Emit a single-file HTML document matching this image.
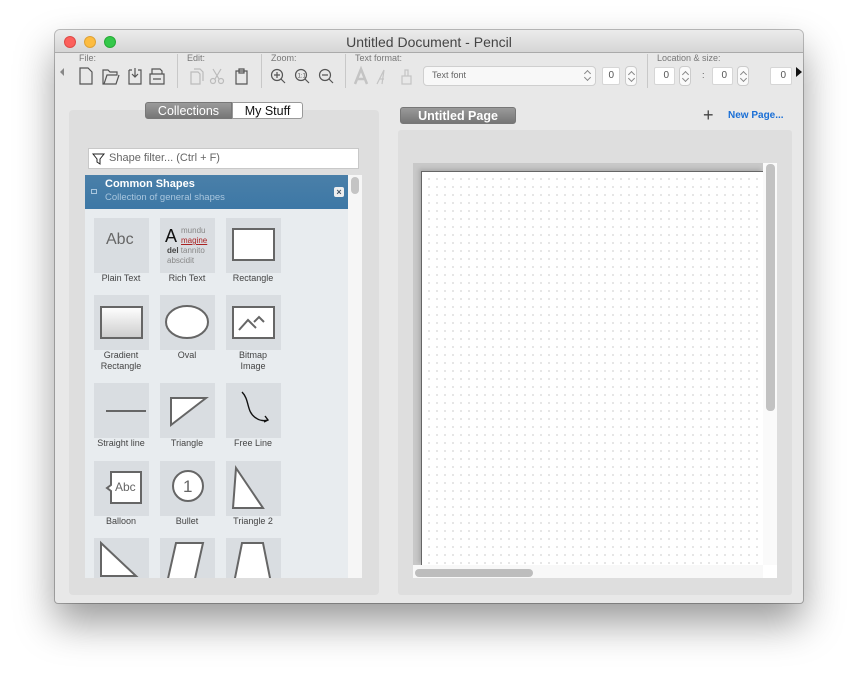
<!DOCTYPE html>
<html><head><meta charset="utf-8"><style>
*{margin:0;padding:0;box-sizing:border-box}
body{width:859px;height:683px;background:#fff;font-family:"Liberation Sans",sans-serif;position:relative;overflow:hidden}
.a{position:absolute}
.win{left:55px;top:30px;width:748px;height:573px;background:#e8e8e8;border-radius:5px 5px 3px 3px;box-shadow:0 20px 40px rgba(0,0,0,.4),0 0 0 1px rgba(0,0,0,.25);overflow:hidden}
.title{left:0;top:0;width:748px;height:23px;background:linear-gradient(#ececec,#d6d6d6);border-bottom:1px solid #aaa;text-align:center;font-size:14px;color:#444;line-height:24px}
.dot{top:6px;width:12px;height:12px;border-radius:50%}
.lbl{font-size:9px;color:#777;top:23px}
.sep{top:24px;width:1px;height:34px;background:#c8c8c8}
.small{font-size:9px;color:#555}
.box{background:#fff;border:1px solid #d6d6d6;font-size:10px;color:#555;text-align:right;padding-right:5px;line-height:16px;height:18px;border-radius:2px}
.spin{width:12px;height:20px;border:1px solid #ccc;border-radius:4px;background:#fafafa}
.spin:before,.spin:after{content:"";position:absolute;left:3px;width:4px;height:4px;border-left:1px solid #888;border-top:1px solid #888}
.spin:before{top:5px;transform:rotate(45deg)}
.spin:after{top:9px;transform:rotate(-135deg)}
.tile{width:55px;height:55px;background:#d9dde1}
.cap{width:80px;text-align:center;font-size:9px;color:#444;line-height:11px}
</style></head><body>
<div class="a win">
 <div class="a title">Untitled Document - Pencil</div>
 <div class="a dot" style="left:9px;background:#fc605c;border:1px solid #de4a46"></div>
 <div class="a dot" style="left:29px;background:#fdbc40;border:1px solid #dea236"></div>
 <div class="a dot" style="left:49px;background:#34c84a;border:1px solid #27aa36"></div>
 <div class="a lbl" style="left:24px">File:</div>
 <div class="a lbl" style="left:132px">Edit:</div>
 <div class="a lbl" style="left:216px">Zoom:</div>
 <div class="a lbl" style="left:300px">Text format:</div>
 <div class="a lbl" style="left:602px">Location &amp; size:</div>
 <div class="a sep" style="left:122px"></div>
 <div class="a sep" style="left:206px"></div>
 <div class="a sep" style="left:290px"></div>
 <div class="a sep" style="left:592px"></div>
 <div class="a" style="left:5px;top:38px;width:0;height:0;border-top:4px solid transparent;border-bottom:4px solid transparent;border-right:4px solid #888"></div>
 <svg class="a" style="left:0;top:30px" width="748" height="30" fill="none" stroke="#555" stroke-width="1.2">
  <path d="M25 8h8l4 4v12H25z"/>
  <path d="M48 10h5l2 2h7v3H52l-3 9h-1zM49 24h12l3-9"/>
  <path d="M74 10h3M83 10h3v14H74V10M80 8v9m-3-3l3 3 3-3"/>
  <path d="M97 14v-5h8l2 2v3M95 14h14v10H95zM98 19h8"/>
  <g stroke="#bbb"><path d="M136 12h7l2 2v10h-9zM139 9h6l3 3v9"/><circle cx="158" cy="21" r="2.5"/><circle cx="166" cy="21" r="2.5"/><path d="M160 19l6-10M164 19l-6-10"/></g>
  <path d="M181 11h11v13h-11zM184 9h5v4h-5z"/>
  <circle cx="222" cy="15" r="5.5"/><path d="M226 19l4 4M219 15h6M222 12v6"/>
  <circle cx="246" cy="15" r="5.5"/><path d="M250 19l4 4"/><text x="242.5" y="17.5" font-size="6" fill="#555" stroke="none">1:1</text>
  <circle cx="270" cy="15" r="5.5"/><path d="M274 19l4 4M267 15h6"/>
  <g stroke="#c4c4c4"><path d="M300 24l6-15 6 15M302 19h8" stroke-width="2.5"/><path d="M322 24l7-14-2 14M324 19h5"/><path d="M350 16v-6h3v6M347 16h9v8h-9z"/></g>
 </svg>
 <div class="a" style="left:368px;top:36px;width:173px;height:20px;background:#f8f8f8;border:1px solid #cfcfcf;border-radius:4px;font-size:9px;color:#666;padding:3px 8px">Text font</div>
 <div class="a spin" style="left:527px;top:36px;border:none;background:none"></div>
 <div class="a box" style="left:547px;top:37px;width:18px">0</div>
 <div class="a spin" style="left:570px;top:36px"></div>
 <div class="a box" style="left:599px;top:37px;width:21px">0</div>
 <div class="a spin" style="left:624px;top:36px"></div>
 <div class="a small" style="left:647px;top:40px">:</div>
 <div class="a box" style="left:657px;top:37px;width:21px">0</div>
 <div class="a spin" style="left:682px;top:36px"></div>
 <div class="a box" style="left:715px;top:37px;width:22px">0</div>
 <div class="a" style="left:741px;top:37px;border-top:5px solid transparent;border-bottom:5px solid transparent;border-left:6px solid #111"></div>
 <div class="a" style="left:14px;top:80px;width:310px;height:485px;background:#dedede;border-radius:4px"></div>
 <div class="a" style="left:90px;top:72px;width:87px;height:17px;background:linear-gradient(#9a9a9a,#767676);border-radius:3px 0 0 3px;color:#fff;font-size:12.5px;text-align:center;line-height:16px;border:1px solid #777">Collections</div>
 <div class="a" style="left:177px;top:72px;width:71px;height:17px;background:#fff;border-radius:0 3px 3px 0;color:#111;font-size:12.5px;text-align:center;line-height:16px;border:1px solid #999">My Stuff</div>
 <div class="a" style="left:33px;top:118px;width:271px;height:21px;background:#fff;border:1px solid #c8c8c8;font-size:11px;color:#666;padding:3px 0 0 20px">Shape filter... (Ctrl + F)</div>
 <svg class="a" style="left:37px;top:123px" width="14" height="12"><path d="M1 1h11l-4 5v5l-3-2V6z" fill="none" stroke="#222"/></svg>
 <div class="a" style="left:30px;top:145px;width:263px;height:403px;background:#e8ecef"></div>
 <div class="a" style="left:293px;top:145px;width:14px;height:403px;background:#f6f6f6"></div>
 <div class="a" style="left:296px;top:147px;width:8px;height:17px;background:#c4c4c4;border-radius:4px"></div>
 <div class="a" style="left:30px;top:145px;width:263px;height:34px;background:linear-gradient(#4a7fa8,#3d78a6)"></div>
 <div class="a" style="left:50px;top:148px;font-size:11px;font-weight:bold;color:#fff">Common Shapes</div>
 <div class="a" style="left:50px;top:162px;font-size:9.5px;color:#a9c6de">Collection of general shapes</div>
 <div class="a" style="left:36px;top:159px;width:6px;height:5px;border:1px solid #a9c6de"></div>
 <div class="a" style="left:279px;top:157px;width:10px;height:10px;background:#eee;border-radius:2px;font-size:9px;line-height:10px;text-align:center;color:#456;font-weight:bold">×</div>
 <div class="a tile" style="left:39px;top:188px"></div><div class="a tile" style="left:105px;top:188px"></div><div class="a tile" style="left:171px;top:188px"></div>
 <div class="a tile" style="left:39px;top:265px"></div><div class="a tile" style="left:105px;top:265px"></div><div class="a tile" style="left:171px;top:265px"></div>
 <div class="a tile" style="left:39px;top:353px"></div><div class="a tile" style="left:105px;top:353px"></div><div class="a tile" style="left:171px;top:353px"></div>
 <div class="a tile" style="left:39px;top:431px"></div><div class="a tile" style="left:105px;top:431px"></div><div class="a tile" style="left:171px;top:431px"></div>
 <div class="a tile" style="left:39px;top:508px;height:40px"></div><div class="a tile" style="left:105px;top:508px;height:40px"></div><div class="a tile" style="left:171px;top:508px;height:40px"></div>
 <div class="a" style="left:51px;top:201px;font-size:16px;color:#666">Abc</div>
 <div class="a" style="left:110px;top:196px;font-size:18px;color:#111">A</div>
 <div class="a" style="left:126px;top:196px;font-size:8px;color:#888;line-height:10px">mundu<br><span style="color:#a22;text-decoration:underline">magine</span></div>
 <div class="a" style="left:112px;top:216px;font-size:8px;color:#888;line-height:10px"><b style="color:#444">del</b> tannito<br>abscidit</div>
 <svg class="a" style="left:0;top:0" width="300" height="548" fill="#fff" stroke="#666" stroke-width="2">
  <rect x="178" y="199" width="41" height="31"/>
  <defs><linearGradient id="g" x1="0" y1="0" x2="0" y2="1"><stop offset="0" stop-color="#fff"/><stop offset="1" stop-color="#ccc"/></linearGradient></defs>
  <rect x="46" y="277" width="41" height="31" fill="url(#g)"/>
  <ellipse cx="132" cy="292" rx="21" ry="16"/>
  <rect x="178" y="277" width="41" height="31"/><path d="M184 300l9-10 8 8M199 292l5-5 5 5" fill="none"/>
  <path d="M51 381h40" fill="none"/>
  <path d="M116 368h35l-35 27z"/>
  <path d="M187 362c8 8 4 20 14 26 4 3 9 3 12 2m-3-4l3 4-4 2" fill="none" stroke="#111" stroke-width="1.4"/>
  <path d="M56 442h30v31H56v-12l-4-3 4-3z"/>
  <circle cx="133" cy="456" r="15"/>
  <path d="M181 438l27 40h-30z"/>
  <path d="M46 513l35 33H46z"/>
  <path d="M121 513h27l-9 40h-27z"/>
  <path d="M187 513h21l8 40h-37z"/>
 </svg>
 <div class="a" style="left:128px;top:447px;font-size:17px;color:#666">1</div>
 <div class="a" style="left:60px;top:450px;font-size:12px;color:#666">Abc</div>
 <div class="a cap" style="left:26px;top:243px">Plain Text</div><div class="a cap" style="left:92px;top:243px">Rich Text</div><div class="a cap" style="left:158px;top:243px">Rectangle</div>
 <div class="a cap" style="left:26px;top:320px">Gradient<br>Rectangle</div><div class="a cap" style="left:92px;top:320px">Oval</div><div class="a cap" style="left:158px;top:320px">Bitmap<br>Image</div>
 <div class="a cap" style="left:26px;top:408px">Straight line</div><div class="a cap" style="left:92px;top:408px">Triangle</div><div class="a cap" style="left:158px;top:408px">Free Line</div>
 <div class="a cap" style="left:26px;top:486px">Balloon</div><div class="a cap" style="left:92px;top:486px">Bullet</div><div class="a cap" style="left:158px;top:486px">Triangle 2</div>
 <div class="a" style="left:345px;top:77px;width:116px;height:17px;background:linear-gradient(#9a9a9a,#767676);border:1px solid #777;border-radius:3px;color:#fff;font-weight:bold;font-size:12.5px;text-align:center;line-height:16px">Untitled Page</div>
 <div class="a" style="left:648px;top:76px;font-size:18px;color:#444;line-height:18px">+</div>
 <div class="a" style="left:673px;top:80px;font-size:10px;font-weight:bold;color:#1a6fd6">New Page...</div>
 <div class="a" style="left:343px;top:100px;width:394px;height:465px;background:#dedede;border-radius:3px"></div>
 <div class="a" style="left:358px;top:133px;width:364px;height:415px;background:#c8c8c8"></div>
 <div class="a" style="left:366px;top:141px;width:342px;height:394px;background-color:#fff;background-image:radial-gradient(circle,#d6d6d6 0.7px,transparent 1px);background-size:8px 8px;background-position:3px 3px;border-left:1px solid #666;border-top:1px solid #666;box-shadow:-2px -2px 4px rgba(0,0,0,.15)"></div>
 <div class="a" style="left:708px;top:133px;width:14px;height:402px;background:#fafafa"></div>
 <div class="a" style="left:711px;top:134px;width:9px;height:247px;background:#c2c2c2;border-radius:4px"></div>
 <div class="a" style="left:358px;top:535px;width:350px;height:13px;background:#f8f8f8"></div>
 <div class="a" style="left:708px;top:535px;width:14px;height:13px;background:#fff"></div>
 <div class="a" style="left:360px;top:539px;width:118px;height:8px;background:#bdbdbd;border-radius:4px"></div>
</div>
</body></html>
